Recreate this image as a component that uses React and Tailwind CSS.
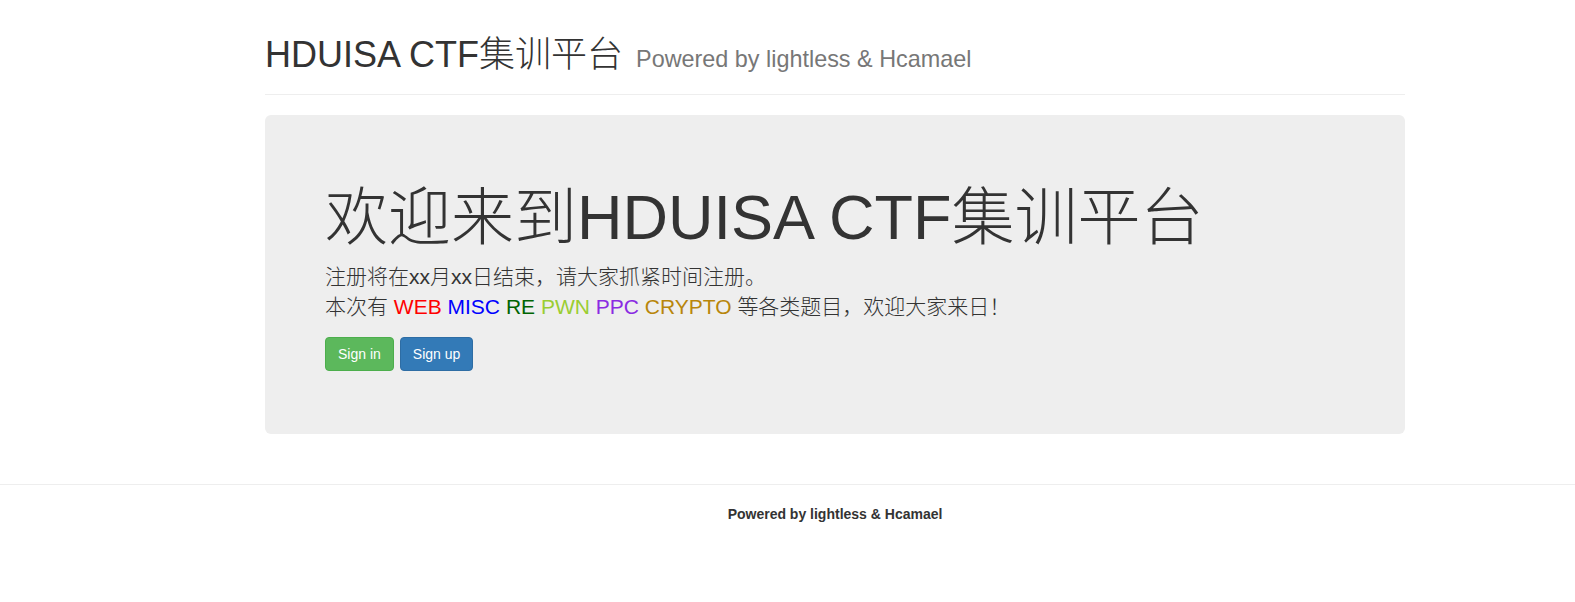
import React from 'react';

const FONT = "font-['Liberation_Sans','Noto_Sans_CJK_SC',sans-serif]";

const Tags = [
  { name: 'WEB', color: 'text-[#ff0000]' },
  { name: 'MISC', color: 'text-[#0000ff]' },
  { name: 'RE', color: 'text-[#006400]' },
  { name: 'PWN', color: 'text-[#9acd32]' },
  { name: 'PPC', color: 'text-[#8a2be2]' },
  { name: 'CRYPTO', color: 'text-[#b8860b]' },
];

const App = () => {
  return (
    <div className={`min-h-screen bg-white text-[#333] overflow-hidden ${FONT}`}>
      {/* Main container */}
      <div className="ml-[250px] w-[1170px] px-[15px] pt-[35px]">
        <div className="border-b border-[#eee] pb-[9px] mb-[20px]">
          <h1 className="text-[36px] leading-[1.1] font-light mb-[10px]">
            HDUISA CTF集训平台{' '}
            <small className="ml-[3px] text-[23.4px] text-[#777]">Powered by lightless &amp; Hcamael</small>
          </h1>
        </div>

        <div className="bg-[#eee] rounded-[6px] px-[60px] pt-[48px] pb-[48px] mb-[50px]">
          <h1 className="text-[63px] leading-[1.1] font-light mt-[20px] mb-[10px]">
            欢迎来到HDUISA CTF集训平台
          </h1>
          <p className="text-[21px] leading-[30px] font-light mb-[15px]">
            注册将在xx月xx日结束，请大家抓紧时间注册。
            <br />
            本次有{' '}
            {Tags.map((t) => (
              <React.Fragment key={t.name}>
                <span className={t.color}>{t.name}</span>{' '}
              </React.Fragment>
            ))}
            等各类题目，欢迎大家来日！
          </p>
          <p className="flex gap-[6px] mb-[15px]">
            <button className="h-[34px] px-[12px] text-[14px] leading-[20px] text-white bg-[#5cb85c] border border-[#4cae4c] rounded-[4px]">
              Sign in
            </button>
            <button className="h-[34px] px-[12px] text-[14px] leading-[20px] text-white bg-[#337ab7] border border-[#2e6da4] rounded-[4px]">
              Sign up
            </button>
          </p>
        </div>
      </div>

      {/* Footer */}
      <footer className="border-t border-[#eee] pt-[19px]">
        <div className="ml-[250px] w-[1170px] px-[15px] text-center">
          <p className="text-[14px] leading-[20px] font-bold text-[#333]">
            Powered by lightless &amp; Hcamael
          </p>
        </div>
      </footer>
    </div>
  );
};

export default App;
